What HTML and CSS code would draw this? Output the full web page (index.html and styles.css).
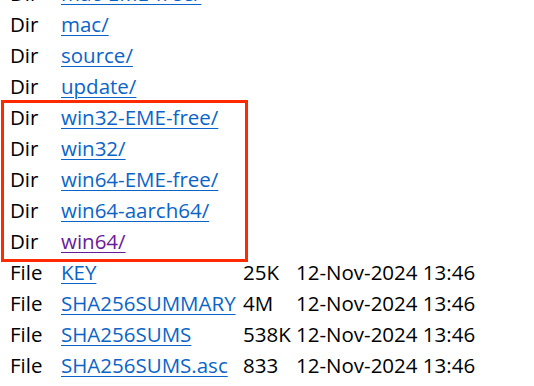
FILE: index.html
```html
<html>

<head>
    <link rel="stylesheet" href="styles.css">
</head>

<body>
    <div class="listing">
        <div class="row"><span class="type">Dir</span><a href="#">mac-EME-free/</a></div>
        <div class="row"><span class="type">Dir</span><a href="#">mac/</a></div>
        <div class="row"><span class="type">Dir</span><a href="#">source/</a></div>
        <div class="row"><span class="type">Dir</span><a href="#">update/</a></div>
        <div class="highlight">
            <div class="row"><span class="type">Dir</span><a href="#">win32-EME-free/</a></div>
            <div class="row"><span class="type">Dir</span><a href="#">win32/</a></div>
            <div class="row"><span class="type">Dir</span><a href="#">win64-EME-free/</a></div>
            <div class="row"><span class="type">Dir</span><a href="#">win64-aarch64/</a></div>
            <div class="row"><span class="type">Dir</span><a href="#" class="visited">win64/</a></div>
        </div>
        <div class="row"><span class="type">File</span><a href="#">KEY</a><span class="size">25K</span><span class="date">12-Nov-2024 13:46</span></div>
        <div class="row"><span class="type">File</span><a href="#">SHA256SUMMARY</a><span class="size">4M</span><span class="date">12-Nov-2024 13:46</span></div>
        <div class="row"><span class="type">File</span><a href="#">SHA256SUMS</a><span class="size">538K</span><span class="date">12-Nov-2024 13:46</span></div>
        <div class="row"><span class="type">File</span><a href="#">SHA256SUMS.asc</a><span class="size">833</span><span class="date">12-Nov-2024 13:46</span></div>
    </div>
</body>

</html>
```

FILE: styles.css
```css
body {
    margin: 0;
    background-color: #ffffff;
    font-family: 'Open Sans', 'Noto Sans', sans-serif;
    font-size: 20.5px;
    color: #000000;
    overflow: hidden;
}

.listing {
    margin-top: -22px;
    padding-left: 10px;
}

.row {
    display: grid;
    grid-template-columns: 51px 182px 53px auto;
    height: 31px;
    line-height: 31px;
    white-space: nowrap;
}

.row a {
    color: #0b64c8;
    text-decoration: underline;
    text-underline-offset: 3px;
    text-decoration-thickness: 1px;
}

.row a.visited {
    color: #6a1b9a;
}

.highlight {
    position: relative;
}

.highlight::after {
    content: "";
    position: absolute;
    left: -9px;
    top: -2px;
    width: 247px;
    height: 162px;
    border: 3px solid #ff2a00;
    box-sizing: border-box;
}
```
